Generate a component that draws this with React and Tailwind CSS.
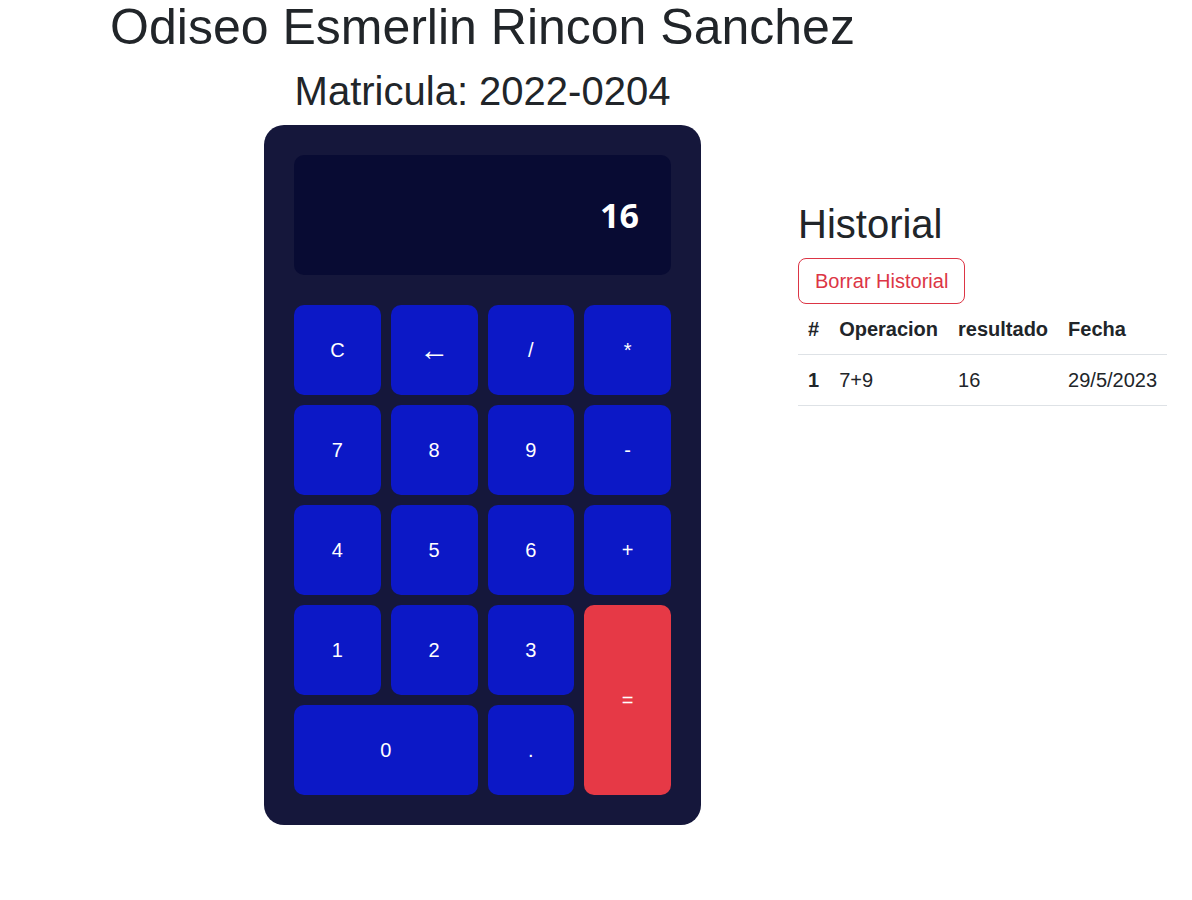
import React from "react";

const keys = [
  { label: "C" },
  { label: "←", arrow: true },
  { label: "/" },
  { label: "*" },
  { label: "7" },
  { label: "8" },
  { label: "9" },
  { label: "-" },
  { label: "4" },
  { label: "5" },
  { label: "6" },
  { label: "+" },
  { label: "1" },
  { label: "2" },
  { label: "3" },
  { label: "=", equal: true },
  { label: "0", wide: true },
  { label: "." },
];

const historial = [{ id: 1, operacion: "7+9", resultado: "16", fecha: "29/5/2023" }];

function Key({ label, wide, equal, arrow }) {
  let cls =
    "flex items-center justify-center rounded-[10px] text-white text-[20px] bg-[#0c18c6]";
  if (wide) cls += " col-span-2";
  if (equal) cls = "flex items-center justify-center rounded-[10px] text-white text-[20px] bg-[#e63946] row-span-2";
  return (
    <button className={cls}>
      {arrow ? <span className="text-[30px] leading-none">{label}</span> : label}
    </button>
  );
}

export default function App() {
  return (
    <div
      className="min-h-[900px] bg-white text-[#212529]"
      style={{ fontFamily: '"Liberation Sans", Arial, sans-serif' }}
    >
      {/* Encabezado */}
      <div className="w-[965px] text-center">
        <h1 className="pt-[2px] text-[50px] leading-[50px] font-normal">
          Odiseo Esmerlin Rincon Sanchez
        </h1>
        <h2 className="mt-[15px] text-[40px] leading-[48px] font-normal">Matricula: 2022-0204</h2>
      </div>

      <div className="flex items-start pl-[264px]">
        {/* Calculadora */}
        <div className="mt-[10px] w-[437px] rounded-[20px] bg-[#15173b] p-[30px]">
          <div className="flex h-[120px] items-center justify-end rounded-[10px] bg-[#080b33] pr-8">
            <span
              className="text-[34px] font-bold text-white"
              style={{ fontFamily: '"Open Sans", "Noto Sans", sans-serif' }}
            >
              16
            </span>
          </div>
          <div className="mt-[30px] grid grid-cols-4 auto-rows-[90px] gap-[10px]">
            {keys.map((k) => (
              <Key key={k.label} {...k} />
            ))}
          </div>
        </div>

        {/* Historial */}
        <div className="ml-[97px] mt-[85px]">
          <h3 className="text-[40px] leading-[48px] font-normal">Historial</h3>
          <button className="mt-[10px] flex h-[46px] items-center rounded-[8px] border border-[#dc3545] px-4 text-[20px] text-[#dc3545]">
            Borrar Historial
          </button>
          <table className="text-[20px] leading-[30px]">
            <thead>
              <tr className="border-b border-[#dee2e6]">
                <th className="p-[10px] text-left font-bold">#</th>
                <th className="p-[10px] text-left font-bold">Operacion</th>
                <th className="p-[10px] text-left font-bold">resultado</th>
                <th className="p-[10px] text-left font-bold">Fecha</th>
              </tr>
            </thead>
            <tbody>
              {historial.map((h) => (
                <tr key={h.id} className="border-b border-[#dee2e6]">
                  <td className="p-[10px] font-bold">{h.id}</td>
                  <td className="p-[10px]">{h.operacion}</td>
                  <td className="p-[10px]">{h.resultado}</td>
                  <td className="p-[10px]">{h.fecha}</td>
                </tr>
              ))}
            </tbody>
          </table>
        </div>
      </div>
    </div>
  );
}
